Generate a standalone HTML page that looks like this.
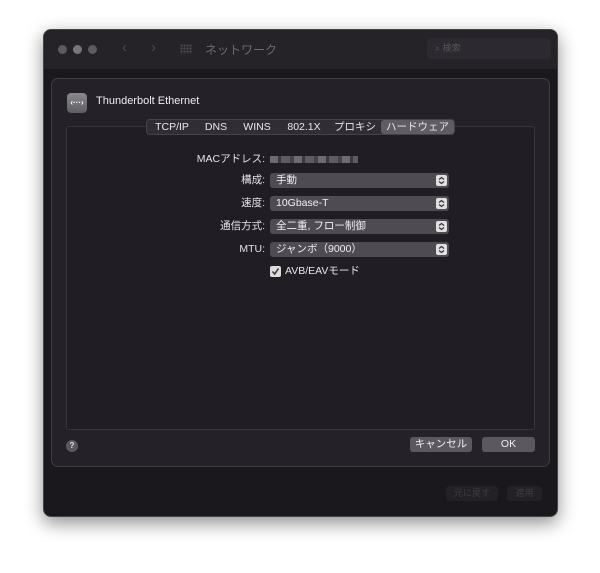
<!DOCTYPE html>
<html><head><meta charset="utf-8"><style>
*{box-sizing:border-box;margin:0;padding:0}
body{width:600px;height:573px;background:#fff;font-family:"Liberation Sans","Noto Sans CJK JP",sans-serif;position:relative;overflow:hidden;font-size:10px;color:#e6e6e8}
.win{position:absolute;left:43px;top:29px;width:515px;height:488px;background:#1a181d;border-radius:8px;box-shadow:0 6px 18px rgba(0,0,0,.45);border:1px solid #444}
.tb{position:absolute;left:0;top:0;width:100%;height:39px;background:#252328;border-radius:8px 8px 0 0}
.dot{position:absolute;top:15px;width:9px;height:9px;border-radius:50%;background:#5c5b60}
.sheet{position:absolute;left:51px;top:78px;width:499px;height:389px;background:#242129;border:1px solid #3f3c44;border-radius:7px}
.inner{position:absolute;left:66px;top:126px;width:469px;height:304px;background:#201d24;border:1px solid #37343c;border-radius:3px}
.tabs{position:absolute;left:146px;top:119px;height:16px;width:309px;background:#302d35;border:1px solid #45424a;border-radius:4px;display:flex;font-size:10.5px;line-height:14px}
.tabs span{text-align:center;color:#e8e8ea}
.tabs .a{background:#5f5c63;border-radius:3px}
.lbl{position:absolute;text-align:right;width:100px;font-size:10.5px;line-height:15px;color:#e2e2e4}
.pop{position:absolute;left:270px;width:179px;height:15px;background:#4e4b52;border-radius:3px;font-size:10.5px;line-height:15px;padding-left:6px;color:#f0f0f0}
.pop svg{position:absolute;right:2px;top:2px}
.btn{position:absolute;top:437px;height:15px;border-radius:3px;background:#5b5860;font-size:10.5px;line-height:15px;text-align:center;color:#f0f0f0}
</style></head><body>
<div class="win">
 <div class="tb">
  <div class="dot" style="left:14px"></div><div class="dot" style="left:29px;background:#77767b"></div><div class="dot" style="left:44px"></div>
  <div style="position:absolute;left:78px;top:9px;color:#4a494e;font-size:15px">‹</div>
  <div style="position:absolute;left:107px;top:9px;color:#4a494e;font-size:15px">›</div>
  <div style="position:absolute;left:136px;top:14px;width:12px;height:10px;background:radial-gradient(circle,#4d4c51 1px,transparent 1.2px) 0 0/3px 3px"></div>
  <div style="position:absolute;left:161px;top:11px;font-size:12px;color:#6d6c71">ネットワーク</div>
  <div style="position:absolute;left:383px;top:8px;width:124px;height:21px;background:#2c2a30;border-radius:5px;font-size:9px;color:#555;line-height:21px;padding-left:8px">⌕ 検索</div>
 </div>
 <div style="position:absolute;left:402px;top:456px;width:52px;height:15px;background:#232126;border-radius:3px;color:#3e3d42;font-size:9px;text-align:center;line-height:15px">元に戻す</div>
 <div style="position:absolute;left:463px;top:456px;width:35px;height:15px;background:#232126;border-radius:3px;color:#3e3d42;font-size:9px;text-align:center;line-height:15px">適用</div>
</div>
<div class="sheet"></div>
<div style="position:absolute;left:67px;top:93px;width:20px;height:20px;border-radius:4px;background:linear-gradient(#8a898e,#5e5d62);font-size:8px;line-height:20px;text-align:center;color:#fff;font-weight:bold">‹···›</div>
<div style="position:absolute;left:96px;top:95px;font-size:11px;color:#eee">Thunderbolt Ethernet</div>
<div class="inner"></div>
<div class="tabs">
 <span style="width:50px">TCP/IP</span><span style="width:38px">DNS</span><span style="width:44px">WINS</span><span style="width:50px">802.1X</span><span style="width:52px">プロキシ</span><span class="a" style="width:73px">ハードウェア</span>
</div>
<div class="lbl" style="left:165px;top:152px">MACアドレス:</div>
<div style="position:absolute;left:270px;top:156px;width:88px;height:7px;background:repeating-linear-gradient(90deg,#6d6b70 0 8px,#3a383e 8px 11px,#5e5c62 11px 20px,#444 20px 24px)"></div>
<div class="lbl" style="left:165px;top:173px">構成:</div>
<div class="pop" style="top:173px">手動<svg width="11" height="11"><rect width="11" height="11" rx="2" fill="#e0e0e0"/><path d="M3 4.5L5.5 2.5 8 4.5M3 6.5L5.5 8.5 8 6.5" stroke="#333" fill="none" stroke-width="1.2"/></svg></div>
<div class="lbl" style="left:165px;top:196px">速度:</div>
<div class="pop" style="top:196px">10Gbase-T<svg width="11" height="11"><rect width="11" height="11" rx="2" fill="#e0e0e0"/><path d="M3 4.5L5.5 2.5 8 4.5M3 6.5L5.5 8.5 8 6.5" stroke="#333" fill="none" stroke-width="1.2"/></svg></div>
<div class="lbl" style="left:165px;top:219px">通信方式:</div>
<div class="pop" style="top:219px">全二重, フロー制御<svg width="11" height="11"><rect width="11" height="11" rx="2" fill="#e0e0e0"/><path d="M3 4.5L5.5 2.5 8 4.5M3 6.5L5.5 8.5 8 6.5" stroke="#333" fill="none" stroke-width="1.2"/></svg></div>
<div class="lbl" style="left:165px;top:242px">MTU:</div>
<div class="pop" style="top:242px">ジャンボ（9000）<svg width="11" height="11"><rect width="11" height="11" rx="2" fill="#e0e0e0"/><path d="M3 4.5L5.5 2.5 8 4.5M3 6.5L5.5 8.5 8 6.5" stroke="#333" fill="none" stroke-width="1.2"/></svg></div>
<svg style="position:absolute;left:270px;top:266px" width="11" height="11"><rect width="11" height="11" rx="2" fill="#dcdcdc"/><path d="M2.5 5.5L4.7 8 8.5 2.5" stroke="#333" fill="none" stroke-width="1.5"/></svg>
<div style="position:absolute;left:285px;top:264px;font-size:10.5px;line-height:15px">AVB/EAVモード</div>
<div style="position:absolute;left:66px;top:440px;width:12px;height:12px;border-radius:50%;background:#5b5860;font-size:8px;line-height:12px;text-align:center;font-weight:bold">?</div>
<div class="btn" style="left:410px;width:62px">キャンセル</div>
<div class="btn" style="left:482px;width:53px">OK</div>
</body></html>
